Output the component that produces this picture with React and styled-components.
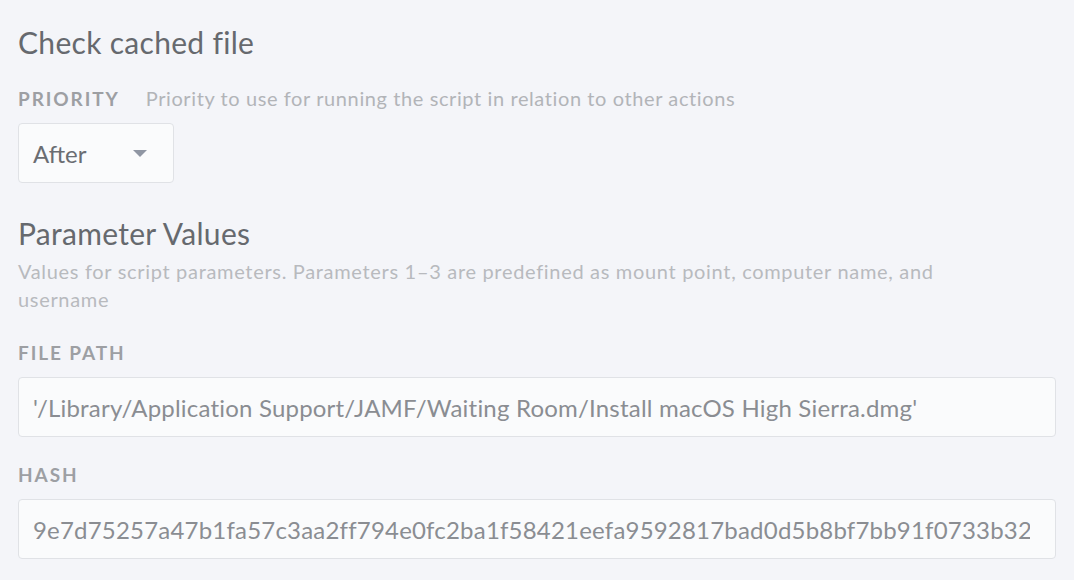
import styled, { createGlobalStyle } from 'styled-components';

const GlobalStyle = createGlobalStyle`
  html, body {
    margin: 0;
    padding: 0;
    background: #f4f5f9;
  }
  body {
    font-family: Lato, "Open Sans", "Liberation Sans", sans-serif;
  }
`

const Page = styled.main`
  display: flex;
  flex-direction: column;
  padding: 24px 18px 20px;
  width: 100%;
  box-sizing: border-box;
  min-height: 580px;
`

const SectionTitle = styled.h2`
  margin: ${props => props.$top || 0}px 0 0;
  font-size: 30px;
  font-weight: 400;
  letter-spacing: 0.3px;
  color: #66696e;
  line-height: 36px;
`

const FieldHead = styled.div`
  display: flex;
  align-items: baseline;
  gap: 26px;
  margin-top: ${props => props.$top || 24}px;
  line-height: 24px;
  height: 24px;
`

const Label = styled.span`
  font-size: 19px;
  font-weight: 700;
  letter-spacing: 1.9px;
  color: #9d9fa3;
  text-transform: uppercase;
`

const Hint = styled.span`
  font-size: 20px;
  letter-spacing: 0.6px;
  color: #b2b4b8;
`

const Select = styled.div`
  display: flex;
  align-items: center;
  justify-content: space-between;
  width: 156px;
  height: 60px;
  box-sizing: border-box;
  margin-top: 13px;
  padding: 0 26px 0 14px;
  background: #fafbfc;
  border: 1px solid #e0e2e6;
  border-radius: 4px;
  font-size: 24px;
  color: #6a6d72;
`

const Caret = styled.span`
  width: 0;
  height: 0;
  border-left: 7px solid transparent;
  border-right: 7px solid transparent;
  border-top: 7px solid #8f96a3;
`

const Description = styled.p`
  margin: 6px 0 0;
  font-size: 20px;
  letter-spacing: 0.68px;
  line-height: 28px;
  color: #b8babe;
  max-width: 945px;
`

const TextField = styled.input`
  display: block;
  width: 100%;
  height: 60px;
  box-sizing: border-box;
  margin-top: 12px;
  padding: 0 25px 0 14px;
  background: #fafbfc;
  border: 1px solid #e0e2e6;
  border-radius: 4px;
  font-family: inherit;
  font-size: 24px;
  letter-spacing: 0.2px;
  color: #8a8d92;
  outline: none;
`

function App() {
  return (
    <Page>
      <GlobalStyle />
      <SectionTitle>Check cached file</SectionTitle>
      <FieldHead $top={26}>
        <Label>Priority</Label>
        <Hint>Priority to use for running the script in relation to other actions</Hint>
      </FieldHead>
      <Select>
        <span>After</span>
        <Caret />
      </Select>
      <SectionTitle $top={32}>Parameter Values</SectionTitle>
      <Description>
        Values for script parameters. Parameters 1–3 are predefined as mount point, computer name, and username
      </Description>
      <FieldHead $top={28}>
        <Label>File Path</Label>
      </FieldHead>
      <TextField readOnly value="'/Library/Application Support/JAMF/Waiting Room/Install macOS High Sierra.dmg'" />
      <FieldHead $top={26}>
        <Label>Hash</Label>
      </FieldHead>
      <TextField readOnly value="9e7d75257a47b1fa57c3aa2ff794e0fc2ba1f58421eefa9592817bad0d5b8bf7bb91f0733b328f2c" />
    </Page>
  );
}

export default App;
